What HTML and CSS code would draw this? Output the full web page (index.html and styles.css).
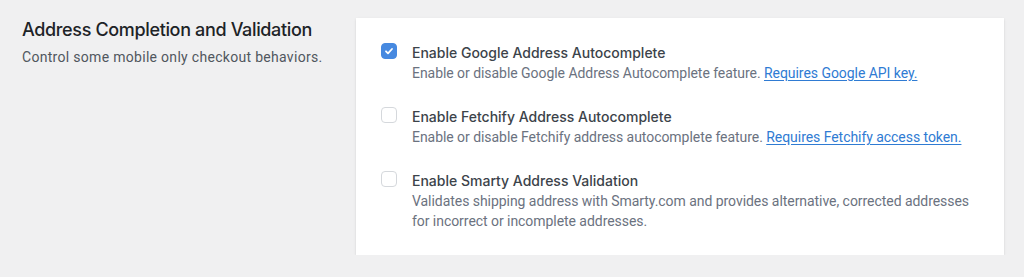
FILE: index.html
```html
<!DOCTYPE html>
<html lang="en">
<head>
<meta charset="utf-8">
<title>Address Completion and Validation</title>
<link rel="stylesheet" href="styles.css">
</head>
<body>
<div class="page">
  <section class="settings">
    <div class="intro">
      <h2 class="intro-title">Address Completion and Validation</h2>
      <p class="intro-text">Control some mobile only checkout behaviors.</p>
    </div>
    <div class="card">
      <div class="option">
        <span class="check checked">
          <svg viewBox="0 0 16 16" width="16" height="16" aria-hidden="true"><path d="M5 8.3l2 2 4-4.3" fill="none" stroke="#fff" stroke-width="1.8" stroke-linecap="round" stroke-linejoin="round"/></svg>
        </span>
        <div class="option-body">
          <div class="option-label">Enable Google Address Autocomplete</div>
          <p class="option-desc">Enable or disable Google Address Autocomplete feature. <a class="option-link" href="#">Requires Google API key.</a></p>
        </div>
      </div>
      <div class="option">
        <span class="check"></span>
        <div class="option-body">
          <div class="option-label">Enable Fetchify Address Autocomplete</div>
          <p class="option-desc">Enable or disable Fetchify address autocomplete feature. <a class="option-link" href="#">Requires Fetchify access token.</a></p>
        </div>
      </div>
      <div class="option">
        <span class="check"></span>
        <div class="option-body">
          <div class="option-label">Enable Smarty Address Validation</div>
          <p class="option-desc">Validates shipping address with Smarty.com and provides alternative, corrected addresses for incorrect or incomplete addresses.</p>
        </div>
      </div>
    </div>
  </section>
</div>
</body>
</html>
```
FILE: styles.css
```css
* { box-sizing: border-box; }
html, body {
  margin: 0;
  padding: 0;
  background: #f0f0f1;
  font-family: Inter, "Noto Sans", "Liberation Sans", sans-serif;
  -webkit-font-smoothing: antialiased;
}
.page {
  padding: 18px 20px 0 22px;
}
.settings {
  display: grid;
  grid-template-columns: 310px 1fr;
  gap: 24px;
  align-items: start;
}
.intro-title {
  margin: 0;
  font-size: 18px;
  line-height: 24px;
  font-weight: 500;
  color: #1d2327;
  letter-spacing: -0.35px;
}
.intro-text {
  margin: 5px 0 0;
  font-family: Roboto, "Liberation Sans", sans-serif;
  font-size: 14px;
  line-height: 20px;
  color: #50575e;
  letter-spacing: 0.3px;
}
.card {
  background: #fff;
  padding: 25px 20px 24px 25px;
  box-shadow: 0 1px 3px rgba(0,0,0,0.08), 0 1px 2px rgba(0,0,0,0.05);
  display: flex;
  flex-direction: column;
  gap: 24px;
}
.option {
  display: flex;
  align-items: flex-start;
  gap: 15px;
}
.check {
  flex: none;
  width: 16px;
  height: 16px;
  border: 1px solid #d5d8dc;
  border-radius: 4px;
  background: #fff;
  display: flex;
}
.check.checked {
  background: #4689e0;
  border-color: #4689e0;
}
.check svg { margin: -1px; }
.option-body { min-width: 0; }
.option-label {
  font-size: 14px;
  line-height: 20px;
  font-weight: 500;
  color: #3c434a;
}
.option-desc {
  margin: 0;
  font-family: Roboto, "Liberation Sans", sans-serif;
  font-size: 14px;
  line-height: 20px;
  color: #6b7280;
  letter-spacing: -0.05px;
}
.option-link {
  color: #2f7bd3;
  text-decoration: underline;
  text-underline-offset: 2px;
}
```
